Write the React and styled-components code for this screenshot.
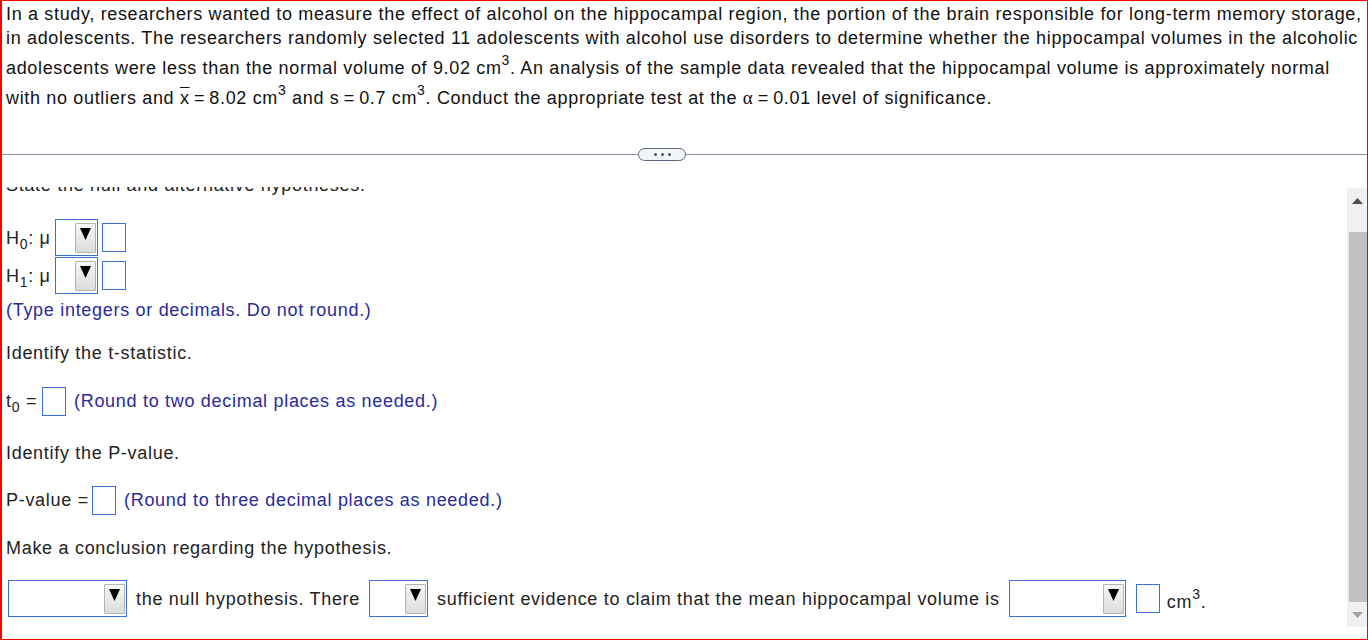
import React from 'react';
import styled, { createGlobalStyle } from 'styled-components';

const GlobalStyle = createGlobalStyle`
  html, body {
    margin: 0;
    padding: 0;
    background: #fff;
  }
`;

const Frame = styled.div`
  width: 1368px;
  height: 640px;
  box-sizing: border-box;
  border: 1px solid #ff0000;
  border-left-width: 2px;
  display: flex;
  flex-direction: column;
  font-family: "Liberation Sans", Arial, sans-serif;
  font-size: 18px;
  letter-spacing: 0.7px;
  overflow: hidden;
`;

const Stem = styled.p`
  margin: 0;
  height: 146px;
  flex: none;
  box-sizing: border-box;
  padding: 1px 0 0 4px;
  line-height: 24px;
  letter-spacing: 0.66px;
  white-space: nowrap;
  color: #111;
`;

const Sup = styled.sup`
  font-size: 14px;
  line-height: 20px;
  vertical-align: 9px;
`;

const Sub = styled.sub`
  font-size: 14px;
  line-height: 0;
  vertical-align: -5px;
`;

const XBar = styled.span`
  text-decoration: overline;
  text-decoration-thickness: 1px;
`;

const Alpha = styled.span`
  font-family: "Liberation Serif", "Times New Roman", serif;
  font-size: 19px;
`;

const Divider = styled.div`
  display: flex;
  align-items: center;
  height: 14px;
  flex: none;
`;

const Rule = styled.div`
  height: 1px;
  background: #8690a2;
  width: ${p => (p.$width ? `${p.$width}px` : 'auto')};
  flex: ${p => (p.$width ? 'none' : '1')};
`;

const Pill = styled.div`
  width: 48px;
  height: 13px;
  box-sizing: border-box;
  border: 1.5px solid #5b6a7e;
  border-radius: 7px;
  background: #f3f4f6;
  display: flex;
  align-items: center;
  justify-content: center;
  gap: 4px;
`;

const Dot = styled.span`
  width: 3px;
  height: 3px;
  border-radius: 50%;
  background: #4a5564;
`;

const Pane = styled.div`
  flex: 1;
  display: flex;
  margin-top: 26px;
  min-height: 0;
`;

const Viewport = styled.div`
  flex: 1;
  overflow: hidden;
`;

const Content = styled.div`
  margin-top: -14px;
  padding-left: 4px;
  color: #222;
  display: flex;
  flex-direction: column;
  align-items: flex-start;
`;

const Line = styled.div`
  margin-top: ${p => p.$mt || 0}px;
  line-height: 24px;
  color: ${p => (p.$hint ? '#2a2a9a' : '#222')};
  white-space: nowrap;
`;

const Row = styled.div`
  margin-top: ${p => p.$mt || 0}px;
  height: ${p => p.$h || 30}px;
  display: flex;
  align-items: center;
  line-height: 24px;
  white-space: nowrap;
`;

const Label = styled.span`
  width: ${p => p.$w}px;
  flex: none;
`;

const Hint = styled.span`
  color: #2a2a9a;
  margin-left: ${p => p.$ml || 0}px;
`;

const Text = styled.span`
  margin-left: ${p => p.$ml || 0}px;
`;

const Box = styled.span`
  flex: none;
  width: 24px;
  height: 29px;
  box-sizing: border-box;
  border: 1px solid #3b6fd4;
  background: #fff;
  margin-left: ${p => p.$ml || 0}px;
`;

const Select = styled.span`
  flex: none;
  width: ${p => p.$w}px;
  height: 37px;
  box-sizing: border-box;
  border: 1px solid #3b6fd4;
  background: #fff;
  display: flex;
  align-items: center;
  justify-content: flex-end;
  padding-right: 1px;
  margin-left: ${p => p.$ml || 0}px;
`;

const SelectButton = styled.span`
  width: 21px;
  height: 30px;
  box-sizing: border-box;
  border: 1px solid #b4b4b4;
  border-radius: 1px;
  background: linear-gradient(#f6f6f6, #dcdcdc);
  display: flex;
  justify-content: center;
  align-items: flex-start;
  padding-top: 4px;
`;

const Scrollbar = styled.div`
  width: 20px;
  flex: none;
  margin: 1px 0 12px;
  background: #f0f0f0;
  display: flex;
  flex-direction: column;
`;

const ArrowButton = styled.div`
  height: ${p => p.$h}px;
  display: flex;
  align-items: center;
  justify-content: center;
  flex: none;
`;

const Thumb = styled.div`
  margin: 18px 0 0 2px;
  height: 370px;
  background: #c1c1c1;
`;

const Spacer = styled.div`
  flex: 1;
`;

function Caret() {
  return (
    <svg width="11" height="12" viewBox="0 0 11 12">
      <polygon points="0,0 11,0 5.5,12" fill="#000" />
    </svg>
  );
}

function Dropdown({ width, ml }) {
  return (
    <Select $w={width} $ml={ml}>
      <SelectButton>
        <Caret />
      </SelectButton>
    </Select>
  );
}

function ScrollArrow({ up, color }) {
  return (
    <svg width="11" height="6" viewBox="0 0 11 6">
      <polygon points={up ? '0,6 11,6 5.5,0' : '0,0 11,0 5.5,6'} fill={color} />
    </svg>
  );
}

export default function App() {
  return (
    <>
      <GlobalStyle />
      <Frame>
        <Stem>
          In a study, researchers wanted to measure the effect of alcohol on the hippocampal region, the portion of the brain
          responsible for long-term memory storage,
          <br />
          in adolescents. The researchers randomly selected 11 adolescents with alcohol use disorders to determine whether the
          hippocampal volumes in the alcoholic
          <br />
          adolescents were less than the normal volume of 9.02 cm<Sup>3</Sup>. An analysis of the sample data revealed that the
          hippocampal volume is approximately normal
          <br />
          with no outliers and <XBar>x</XBar>&#8201;=&#8201;8.02 cm<Sup>3</Sup> and s&#8201;=&#8201;0.7 cm<Sup>3</Sup>. Conduct
          the appropriate test at the <Alpha>α</Alpha>&#8201;=&#8201;0.01 level of significance.
        </Stem>

        <Divider>
          <Rule $width={636} />
          <Pill>
            <Dot />
            <Dot />
            <Dot />
          </Pill>
          <Rule />
        </Divider>

        <Pane>
          <Viewport>
            <Content>
              <Line>State the null and alternative hypotheses.</Line>

              <Row $mt={22} $h={37}>
                <Label $w={49}>
                  H<Sub>0</Sub>: μ
                </Label>
                <Dropdown width={43} />
                <Box $ml={4} />
              </Row>
              <Row $mt={1} $h={37}>
                <Label $w={49}>
                  H<Sub>1</Sub>: μ
                </Label>
                <Dropdown width={43} />
                <Box $ml={4} />
              </Row>

              <Line $mt={4} $hint>(Type integers or decimals. Do not round.)</Line>

              <Line $mt={19}>Identify the t-statistic.</Line>
              <Row $mt={21}>
                <Label $w={36}>
                  t<Sub>0</Sub> =
                </Label>
                <Box />
                <Hint $ml={8}>(Round to two decimal places as needed.)</Hint>
              </Row>

              <Line $mt={25}>Identify the P-value.</Line>
              <Row $mt={20}>
                <Label $w={86}>P-value =</Label>
                <Box />
                <Hint $ml={8}>(Round to three decimal places as needed.)</Hint>
              </Row>

              <Line $mt={21}>Make a conclusion regarding the hypothesis.</Line>
              <Row $mt={20} $h={37}>
                <Dropdown width={119} ml={2} />
                <Text $ml={9}>the null hypothesis. There</Text>
                <Dropdown width={59} ml={9} />
                <Text $ml={9}>sufficient evidence to claim that the mean hippocampal volume is</Text>
                <Dropdown width={117} ml={9} />
                <Box $ml={10} />
                <Text $ml={7}>
                  cm<Sup>3</Sup>.
                </Text>
              </Row>
            </Content>
          </Viewport>

          <Scrollbar>
            <ArrowButton $h={26}>
              <ScrollArrow up color="#505050" />
            </ArrowButton>
            <Thumb />
            <Spacer />
            <ArrowButton $h={24}>
              <ScrollArrow color="#a3a3a3" />
            </ArrowButton>
          </Scrollbar>
        </Pane>
      </Frame>
    </>
  );
}
